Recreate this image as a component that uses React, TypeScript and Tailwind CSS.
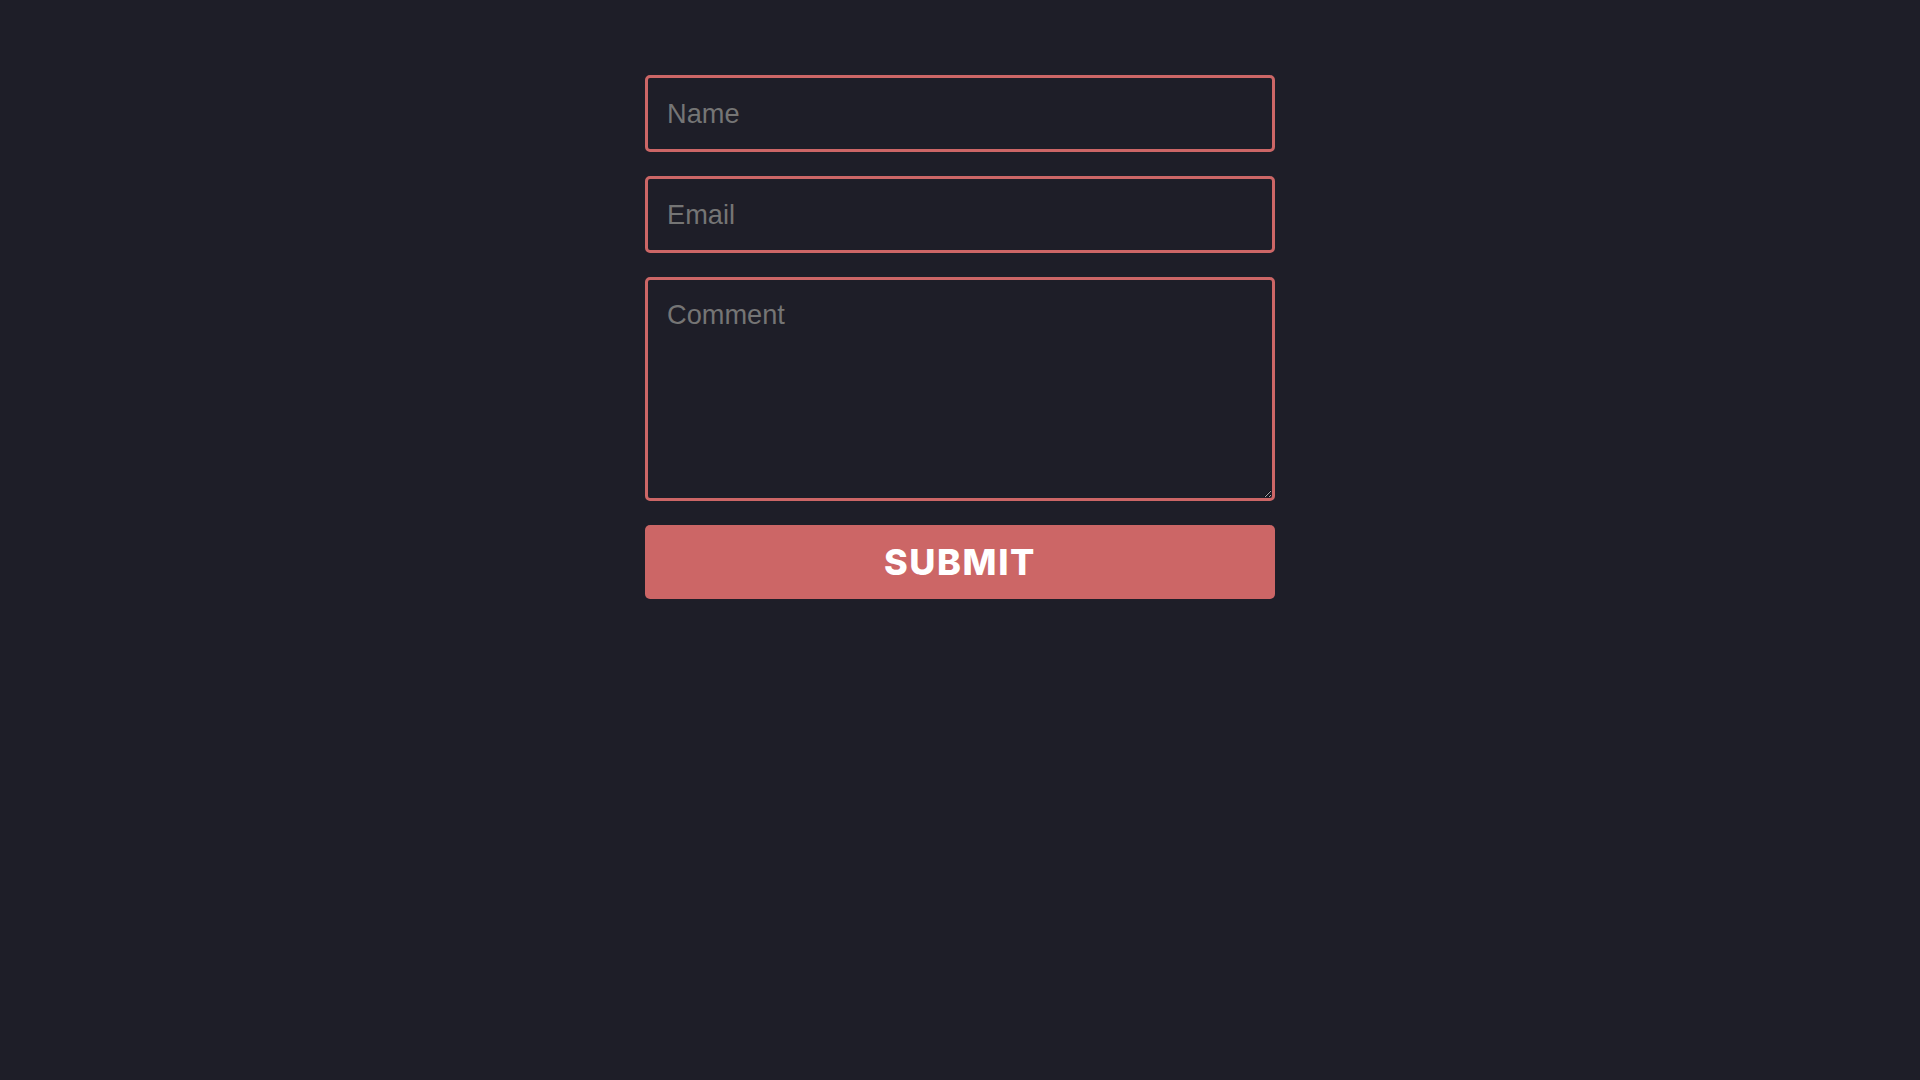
import { Fragment } from "react";

function App() {
  return (
    <Fragment>
      <div className="min-h-screen bg-[#1e1e28] pt-[75px]">
        <form className="mx-auto flex w-[630px] flex-col gap-6">
          <input
            type="text"
            placeholder="Name"
            className="h-[77px] w-full rounded-[5px] border-[3px] border-[#cc6666] bg-transparent px-[19px] font-['Liberation_Sans',Arial,sans-serif] text-[27.2px] text-gray-300 placeholder:text-[#757575] focus:outline-none"
          />
          <input
            type="email"
            placeholder="Email"
            className="h-[77px] w-full rounded-[5px] border-[3px] border-[#cc6666] bg-transparent px-[19px] font-['Liberation_Sans',Arial,sans-serif] text-[27.2px] text-gray-300 placeholder:text-[#757575] focus:outline-none"
          />
          <textarea
            placeholder="Comment"
            className="block h-[224px] w-full rounded-[5px] border-[3px] border-[#cc6666] bg-transparent px-[19px] py-[19px] font-['Liberation_Sans',Arial,sans-serif] text-[27.2px] leading-[1.15] text-gray-300 placeholder:text-[#757575] focus:outline-none"
          />
          <button
            type="submit"
            className="h-[74px] w-full rounded-[5px] bg-[#cc6666] font-['Inter','DejaVu_Sans',sans-serif] text-[36px] font-extrabold tracking-[0.045em] text-white"
          >
            SUBMIT
          </button>
        </form>
      </div>
    </Fragment>
  );
}

export default App;
